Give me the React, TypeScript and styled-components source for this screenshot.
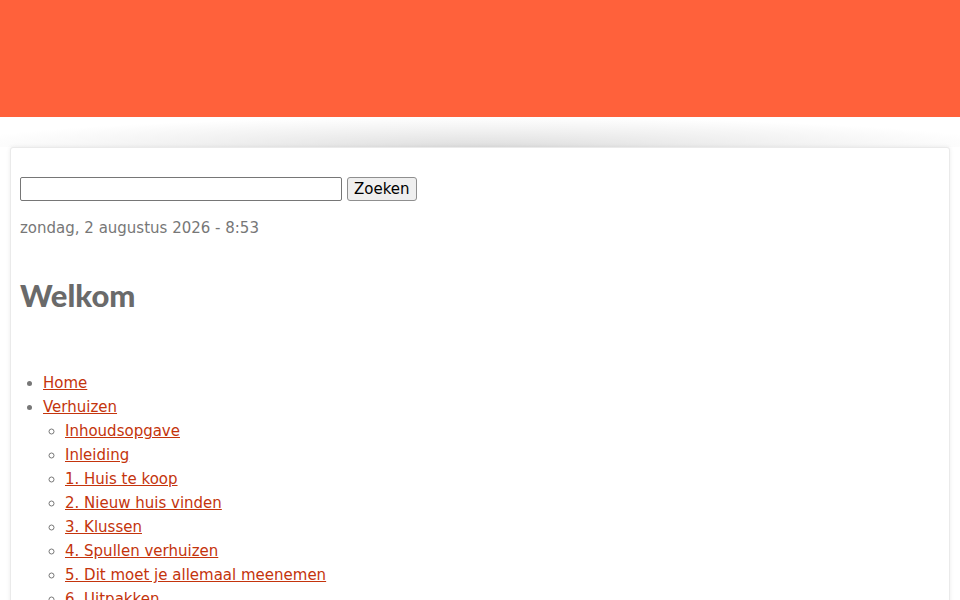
import styled, { createGlobalStyle } from "styled-components";

const GlobalStyle = createGlobalStyle`
    body {
        margin: 0;
        background: #fff;
        font-family: "DejaVu Sans", sans-serif;
        font-size: 15px;
        color: #777;
    }
`

type NavItem = {
    label: string
    children?: NavItem[]
}

const nav: NavItem[] = [
    {label: "Home"},
    {
        label: "Verhuizen",
        children: [
            {label: "Inhoudsopgave"},
            {label: "Inleiding"},
            {label: "1. Huis te koop"},
            {label: "2. Nieuw huis vinden"},
            {label: "3. Klussen"},
            {label: "4. Spullen verhuizen"},
            {label: "5. Dit moet je allemaal meenemen"},
            {label: "6. Uitpakken"},
        ]
    },
]

const NavList = (props: { items: NavItem[], nested?: boolean }) => {
    return (
        <List $nested={props.nested}>
            {
                props.items.map((item) => {
                    return (
                        <Item key={item.label}>
                            <Link href="#">{item.label}</Link>
                            {item.children && <NavList items={item.children} nested/>}
                        </Item>
                    )
                })
            }
        </List>
    )
}

export default function App() {
    return (
        <>
            <GlobalStyle/>
            <Header/>
            <ShadowBand/>
            <Container>
                <SearchForm onSubmit={(e) => e.preventDefault()}>
                    <SearchInput type="text"/>
                    <SearchButton type="submit">Zoeken</SearchButton>
                </SearchForm>
                <DateLine>zondag, 2 augustus 2026 - 8:53</DateLine>
                <Title>Welkom</Title>
                <NavList items={nav}/>
            </Container>
        </>
    )
}

const Header = styled.header`
    height: 117px;
    background: #ff613b;
`

const ShadowBand = styled.div`
    height: 30px;
    background: radial-gradient(ellipse 55% 100% at 50% 100%, #dedede 0%, #f1f1f1 55%, #fff 100%);
`

const Container = styled.main`
    margin: 0 10px;
    padding: 29px 9px 0;
    min-height: 500px;
    background: #fff;
    border: 1px solid #eaeaea;
    border-radius: 3px;
    box-shadow: 0 0 4px rgba(0, 0, 0, 0.08);
`

const SearchForm = styled.form`
    display: flex;
    align-items: center;
    gap: 5px;
`

const SearchInput = styled.input`
    box-sizing: border-box;
    width: 322px;
    height: 24px;
    border: 1px solid #767676;
    border-radius: 2px;
    padding: 0 4px;
    font: inherit;
`

const SearchButton = styled.button`
    box-sizing: border-box;
    height: 24px;
    padding: 0 6px;
    border: 1px solid #8f8f8f;
    border-radius: 3px;
    background: #efefef;
    color: #000;
    font-family: "DejaVu Sans", sans-serif;
    font-size: 15px;
`

const DateLine = styled.p`
    margin: 18px 0 0;
    line-height: 18px;
`

const Title = styled.h1`
    margin: 38px 0 0;
    font-family: Lato, "Open Sans", sans-serif;
    font-size: 31px;
    font-weight: 900;
    line-height: 40px;
    color: #6a6a6a;
`

const List = styled.ul<{ $nested?: boolean }>`
    margin: ${(p) => (p.$nested ? "0" : "56px 0 0")};
    padding-left: ${(p) => (p.$nested ? "22px" : "23px")};
    list-style: ${(p) => (p.$nested ? "circle" : "disc")};
`

const Item = styled.li`
    line-height: 24px;
`

const Link = styled.a`
    color: #c4340c;
`
